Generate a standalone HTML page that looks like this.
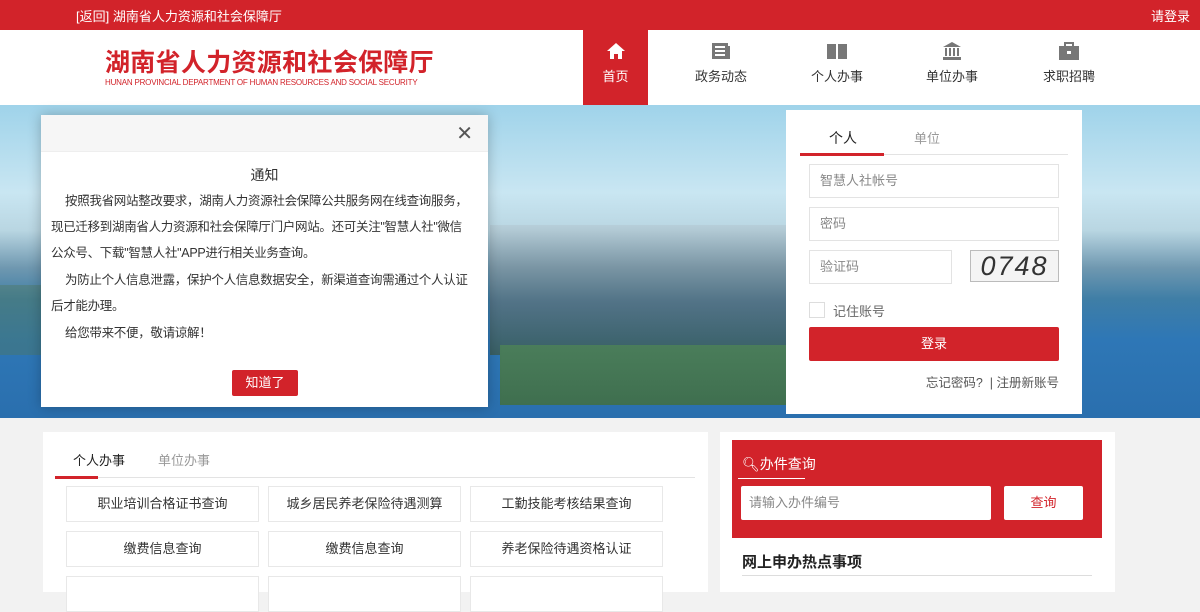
<!DOCTYPE html>
<html><head><meta charset="utf-8"><style>
*{margin:0;padding:0;box-sizing:border-box}
body{width:1200px;height:584px;overflow:hidden;position:relative;font-family:"Liberation Sans","Noto Sans CJK SC",sans-serif;background:#f2f2f2;font-size:13px;color:#333}
.a{position:absolute}
.top{left:0;top:0;width:1200px;height:30px;background:#d2232a;color:#fff}
.hdr{left:0;top:30px;width:1200px;height:75px;background:#fff}
.nav{top:30px;height:75px;width:116px;text-align:center;color:#333;font-size:13px}
.nav svg{display:block;margin:12px auto 6px}
.banner{left:0;top:105px;width:1200px;height:313px;background:linear-gradient(180deg,#9fd3ea 0%,#c9e6f2 28%,#b9d6e2 40%,#6f98b0 52%,#3f7ea6 62%,#2e77b6 75%,#2a6fae 100%)}
.modal{left:41px;top:115px;width:447px;height:292px;background:#fff;box-shadow:0 0 12px rgba(0,0,0,.25)}
.ln{position:absolute;left:10px;font-size:12.5px;letter-spacing:-0.3px;white-space:nowrap;color:#333;line-height:18px}
.login{left:786px;top:110px;width:296px;height:304px;background:#fff}
.inp{position:absolute;border:1px solid #e3e3e3;height:34px;color:#888;font-size:13px;padding-left:10px;line-height:32px}
.cell{position:absolute;width:193px;height:36px;border:1px solid #e8e8e8;text-align:center;line-height:34px;font-size:13px;color:#333;background:#fff}
</style></head><body>
<div class="a top"><span class="a" style="left:76px;top:6px;font-size:13px">[返回] 湖南省人力资源和社会保障厅</span><span class="a" style="left:1151px;top:6px;font-size:13px">请登录</span></div>
<div class="a hdr">
<div class="a" style="left:105px;top:13px;font-size:25px;font-weight:bold;color:#d2232a;letter-spacing:0.3px">湖南省人力资源和社会保障厅</div>
<div class="a" style="left:105px;top:48px;font-size:8px;color:#d2232a;white-space:nowrap;letter-spacing:-0.2px">HUNAN PROVINCIAL DEPARTMENT OF HUMAN RESOURCES AND SOCIAL SECURITY</div>
</div>
<div class="a nav" style="left:583px;width:65px;background:#d2232a;color:#fff"><svg width="20" height="18" viewBox="0 0 20 18"><path d="M10 1L1 9h3v8h4v-5h4v5h4V9h3z" fill="#fff"/></svg>首页</div>
<div class="a nav" style="left:663px"><svg width="20" height="18" viewBox="0 0 20 18"><rect x="1" y="1" width="16" height="16" fill="#777"/><rect x="4" y="4" width="10" height="2" fill="#fff"/><rect x="4" y="8" width="10" height="2" fill="#fff"/><rect x="4" y="12" width="10" height="2" fill="#fff"/><rect x="17" y="4" width="2" height="13" fill="#777"/></svg>政务动态</div>
<div class="a nav" style="left:779px"><svg width="22" height="18" viewBox="0 0 22 18"><path d="M1 2h9v15H1zM12 2h9v15h-9z" fill="#777"/></svg>个人办事</div>
<div class="a nav" style="left:894px"><svg width="20" height="18" viewBox="0 0 20 18"><path d="M10 0L1 5h18z" fill="#777"/><rect x="3" y="6" width="2" height="8" fill="#777"/><rect x="7" y="6" width="2" height="8" fill="#777"/><rect x="11" y="6" width="2" height="8" fill="#777"/><rect x="15" y="6" width="2" height="8" fill="#777"/><rect x="1" y="15" width="18" height="3" fill="#777"/></svg>单位办事</div>
<div class="a nav" style="left:1011px"><svg width="22" height="18" viewBox="0 0 22 18"><rect x="1" y="4" width="20" height="14" fill="#777"/><rect x="7" y="1" width="8" height="4" fill="none" stroke="#777" stroke-width="2"/><rect x="9" y="9" width="4" height="3" fill="#fff"/></svg>求职招聘</div>
<div class="a banner">
<div class="a" style="left:490px;top:120px;width:300px;height:130px;background:linear-gradient(180deg,rgba(180,200,210,.6),rgba(90,110,120,.7) 60%,rgba(60,90,80,.8));"></div>
<div class="a" style="left:0;top:180px;width:300px;height:70px;background:rgba(80,120,90,.4)"></div>
<div class="a" style="left:500px;top:240px;width:320px;height:60px;background:linear-gradient(180deg,#4a7d5a,#3f6f4f)"></div>
</div>
<div class="a modal">
<div style="height:37px;background:#f6f6f6;border-bottom:1px solid #eee;position:relative"><span class="a" style="right:15px;top:6px;font-size:20px;color:#555">✕</span></div>
<div class="a" style="left:0;width:447px;top:50px;text-align:center;font-size:14px;line-height:20px;color:#333">通知</div>
<div class="ln" style="top:77px;left:24px">按照我省网站整改要求，湖南人力资源社会保障公共服务网在线查询服务，</div>
<div class="ln" style="top:103px">现已迁移到湖南省人力资源和社会保障厅门户网站。还可关注"智慧人社"微信</div>
<div class="ln" style="top:129px">公众号、下载"智慧人社"APP进行相关业务查询。</div>
<div class="ln" style="top:156px;left:24px">为防止个人信息泄露，保护个人信息数据安全，新渠道查询需通过个人认证</div>
<div class="ln" style="top:182px">后才能办理。</div>
<div class="ln" style="top:209px;left:24px">给您带来不便，敬请谅解！</div>
<div class="a" style="left:191px;top:255px;width:66px;height:26px;background:#d2232a;color:#fff;text-align:center;line-height:26px;border-radius:2px">知道了</div>
</div>
<div class="a login">
<div class="a" style="left:43px;top:18px;font-size:14px;color:#222">个人</div>
<div class="a" style="left:128px;top:18px;font-size:13px;color:#999">单位</div>
<div class="a" style="left:14px;top:44px;width:268px;height:1px;background:#e3e3e3"></div>
<div class="a" style="left:14px;top:43px;width:84px;height:3px;background:#d2232a"></div>
<div class="inp" style="left:23px;top:54px;width:250px">智慧人社帐号</div>
<div class="inp" style="left:23px;top:97px;width:250px">密码</div>
<div class="inp" style="left:23px;top:140px;width:143px">验证码</div>
<div class="a" style="left:184px;top:140px;width:89px;height:32px;border:1px solid #bbb;background:#f4f4f4;font:italic 27px 'Liberation Sans',sans-serif;color:#333;text-align:center;line-height:30px;letter-spacing:2px">0748</div>
<div class="a" style="left:23px;top:192px;width:16px;height:16px;border:1px solid #ddd"></div>
<div class="a" style="left:47px;top:191px;color:#666">记住账号</div>
<div class="a" style="left:23px;top:217px;width:250px;height:34px;background:#d2232a;color:#fff;text-align:center;line-height:34px;border-radius:2px">登录</div>
<div class="a" style="right:23px;top:262px;color:#555;font-size:12.5px">忘记密码? &nbsp;| 注册新账号</div>
</div>
<div class="a" style="left:43px;top:432px;width:665px;height:160px;background:#fff">
<div class="a" style="left:30px;top:18px;font-size:13px;color:#222">个人办事</div>
<div class="a" style="left:115px;top:18px;font-size:13px;color:#999">单位办事</div>
<div class="a" style="left:12px;top:45px;width:640px;height:1px;background:#e3e3e3"></div>
<div class="a" style="left:12px;top:44px;width:43px;height:3px;background:#d2232a"></div>
</div>
<div class="cell" style="left:66px;top:486px">职业培训合格证书查询</div>
<div class="cell" style="left:268px;top:486px">城乡居民养老保险待遇测算</div>
<div class="cell" style="left:470px;top:486px">工勤技能考核结果查询</div>
<div class="cell" style="left:66px;top:531px">缴费信息查询</div>
<div class="cell" style="left:268px;top:531px">缴费信息查询</div>
<div class="cell" style="left:470px;top:531px">养老保险待遇资格认证</div>
<div class="cell" style="left:66px;top:576px"></div>
<div class="cell" style="left:268px;top:576px"></div>
<div class="cell" style="left:470px;top:576px"></div>
<div class="a" style="left:720px;top:432px;width:395px;height:160px;background:#fff">
<div class="a" style="left:12px;top:8px;width:370px;height:98px;background:#d2232a">
<div class="a" style="left:10px;top:14px;color:#fff;font-size:14px">&#x1F50D;&#xFE0E;办件查询</div>
<div class="a" style="left:6px;top:38px;width:67px;height:1px;background:#fff"></div>
<div class="a" style="left:9px;top:46px;width:250px;height:34px;background:#fff;border-radius:2px;color:#888;padding-left:8px;line-height:34px">请输入办件编号</div>
<div class="a" style="left:272px;top:46px;width:79px;height:34px;background:#fff;border-radius:2px;color:#d2232a;text-align:center;line-height:34px">查询</div>
</div>
<div class="a" style="left:22px;top:119px;font-size:15px;font-weight:bold;color:#222">网上申办热点事项</div>
<div class="a" style="left:22px;top:143px;width:350px;height:1px;background:#ddd"></div>
</div>
</body></html>
